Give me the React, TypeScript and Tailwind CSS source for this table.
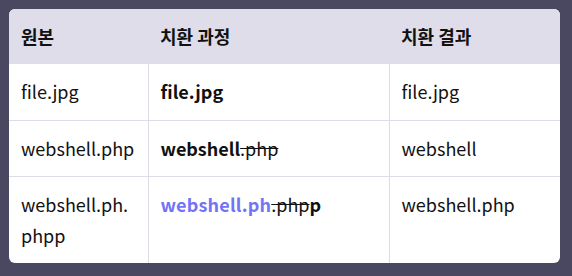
export default function App() {
  const cell = 'px-3 py-3 align-top border-l border-[#dddce6] first:border-l-0';
  return (
    <div className="w-[572px] h-[276px] bg-[#4a4860] p-[9px] pr-[12px]">
      <div className="bg-white rounded-[6px] overflow-hidden h-[254px] font-['Noto_Sans_CJK_KR',sans-serif] text-[18px] leading-[31px] text-[#111]">
        <table className="w-full border-collapse table-fixed">
          <colgroup>
            <col className="w-[139px]" />
            <col className="w-[241px]" />
            <col />
          </colgroup>
          <thead className="bg-[#dedde9]">
            <tr className="h-[55px]">
              <th className="px-3 text-left font-bold">원본</th>
              <th className="px-3 text-left font-bold">치환 과정</th>
              <th className="px-3 text-left font-bold">치환 결과</th>
            </tr>
          </thead>
          <tbody>
            <tr className="h-[56px] border-b border-[#dddce6]">
              <td className={cell}>file.jpg</td>
              <td className={cell}><b>file.jpg</b></td>
              <td className={cell}>file.jpg</td>
            </tr>
            <tr className="h-[56px] border-b border-[#dddce6]">
              <td className={cell}>webshell.php</td>
              <td className={cell}><b>webshell</b><s>.php</s></td>
              <td className={cell}>webshell</td>
            </tr>
            <tr>
              <td className={cell + ' h-[87px]'}>webshell.ph.<br />phpp</td>
              <td className={cell}>
                <b className="text-[#7373f5] tracking-[0.2px]">webshell.ph</b><s>.php</s><b>p</b>
              </td>
              <td className={cell}>webshell.php</td>
            </tr>
          </tbody>
        </table>
      </div>
    </div>
  );
}
